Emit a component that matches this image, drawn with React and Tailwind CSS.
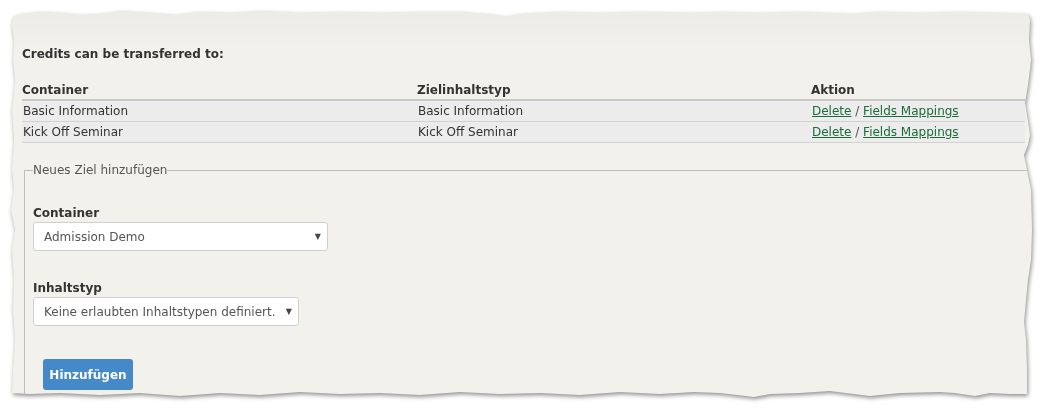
import React from "react";

const rows = [
  { c: "Basic Information", z: "Basic Information" },
  { c: "Kick Off Seminar", z: "Kick Off Seminar" },
];

function FakeSelect({ text, width }) {
  return (
    <div
      className={`${width} h-[29px] flex items-center justify-between bg-white border border-[#cfcfcf] rounded-[3px] pl-[10px] pr-[6px] text-[#555]`}
    >
      <span>{text}</span>
      <span className="text-[8px] text-[#444]">▼</span>
    </div>
  );
}

export default function App() {
  return (
    <div className="w-[1044px] h-[412px] bg-white pt-[10px] pl-[10px] overflow-hidden font-['DejaVu_Sans',sans-serif] text-[12px] leading-[16px] text-[#333]">
      <div className="[filter:drop-shadow(1px_2px_2px_rgba(0,0,0,0.45))]">
        <div className="w-[1026px] h-[392px] bg-[linear-gradient(to_bottom,#ecebe6_0px,#f3f1eb_40px)] pt-[36px] pl-[12px] [clip-path:polygon(3px_7px,10px_4px,30px_2px,50px_3px,70px_5px,90px_4px,110px_1px,140px_3px,165px_5px,190px_2px,220px_3px,250px_1px,290px_3px,330px_2px,370px_3px,410px_2px,450px_2px,485px_5px,495px_7px,510px_4px,550px_2px,590px_3px,630px_2px,680px_3px,710px_2px,750px_3px,790px_2px,840px_4px,870px_2px,910px_3px,950px_2px,990px_3px,1018px_4px,1020px_10px,1019px_30px,1021px_50px,1018px_75px,1015px_93px,1017px_105px,1020px_125px,1018px_135px,1014px_145px,1017px_160px,1021px_180px,1022px_220px,1021px_250px,1018px_270px,1016px_290px,1014px_312px,1016px_330px,1017px_360px,1017px_384px,1000px_384px,980px_383px,965px_386px,945px_383px,930px_382px,890px_383px,860px_386px,820px_381px,790px_383px,760px_384px,744px_387px,710px_383px,684px_382px,650px_384px,610px_382px,570px_385px,530px_383px,490px_384px,450px_382px,410px_385px,370px_383px,330px_384px,290px_382px,250px_385px,210px_383px,170px_386px,130px_383px,90px_385px,50px_383px,20px_384px,2px_383px,3px_360px,5px_330px,3px_300px,4px_270px,2px_240px,5px_220px,1px_200px,4px_180px,2px_160px,4px_130px,2px_100px,5px_70px,3px_50px,4px_30px,2px_15px)]">
          <div className="font-bold">Credits can be transferred to:</div>

          <div className="mt-[18px] w-[1003px]">
            <div className="grid grid-cols-[395px_394px_1fr] h-[21px] items-center border-b-2 border-[#c8c8c8] font-bold">
              <div>Container</div>
              <div>Zielinhaltstyp</div>
              <div>Aktion</div>
            </div>
            {rows.map((r, i) => (
              <div
                key={i}
                className="grid grid-cols-[395px_394px_1fr] h-[21px] items-center bg-[#ececec] border-b border-[#d2d2d2] pl-[1px]"
              >
                <div>{r.c}</div>
                <div>{r.z}</div>
                <div>
                  <span className="text-[#1c6b3a] underline">Delete</span>
                  <span className="text-[#555]"> / </span>
                  <span className="text-[#1c6b3a] underline">Fields Mappings</span>
                </div>
              </div>
            ))}
          </div>

          <fieldset className="mt-[19px] ml-[2px] w-[1030px] border border-[#bdbdbd] pl-[8px] pb-[20px]">
            <legend className="text-[#555] px-0 ml-0">Neues Ziel hinzufügen</legend>
            <div className="mt-[27px] font-bold">Container</div>
            <div className="mt-[1px]">
              <FakeSelect text="Admission Demo" width="w-[295px]" />
            </div>
            <div className="mt-[29px] font-bold">Inhaltstyp</div>
            <div className="mt-[1px]">
              <FakeSelect text="Keine erlaubten Inhaltstypen definiert." width="w-[266px]" />
            </div>
            <button className="mt-[33px] ml-[10px] w-[90px] h-[31px] rounded-[3px] bg-[#4589c8] text-white font-bold text-[12px]">
              Hinzufügen
            </button>
          </fieldset>
        </div>
      </div>
    </div>
  );
}
